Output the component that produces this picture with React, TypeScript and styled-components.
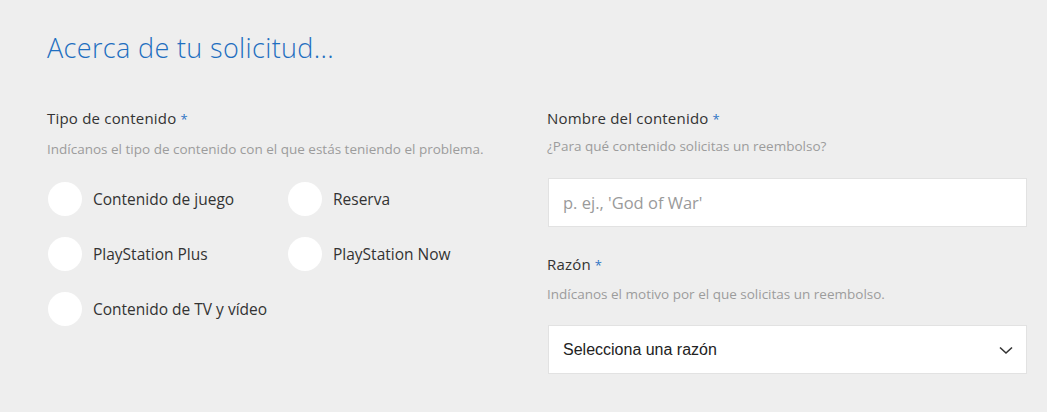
import React from 'react';
import styled, { createGlobalStyle } from 'styled-components';

const GlobalStyle = createGlobalStyle`
  html, body {
    margin: 0;
    padding: 0;
    background: #eeeeee;
  }
  body {
    font-family: 'Open Sans', 'Noto Sans', sans-serif;
    color: #333;
  }
`;

const Page = styled.div`
  width: 1047px;
  height: 412px;
  box-sizing: border-box;
  padding: 30px 20px 0 48px;
  background: #eeeeee;
  overflow: hidden;
`;

const Title = styled.h2`
  margin: 0 0 42px -1px;
  font-size: 27px;
  font-weight: 300;
  letter-spacing: 0.35px;
  line-height: 36px;
  color: #1f6fc0;
`;

const Columns = styled.div`
  display: grid;
  grid-template-columns: 1fr 479px;
  column-gap: 47px;
`;

const Column = styled.div`
  display: flex;
  flex-direction: column;
`;

const Field = styled.div<{ $gap?: number }>`
  display: flex;
  flex-direction: column;
  margin-bottom: ${({ $gap }) => $gap ?? 0}px;
`;

const Label = styled.div`
  margin-left: -1px;
  font-size: 15px;
  line-height: 20px;
  color: #333;
  letter-spacing: 0.2px;
`;

const Required = styled.span`
  color: #2f75c4;
  font-size: 13px;
  margin-left: 4px;
`;

const Hint = styled.div<{ $top?: number }>`
  margin-top: ${({ $top }) => $top ?? 8}px;
  margin-left: -1px;
  font-size: 13.5px;
  line-height: 18px;
  color: #9c9c9c;
`;

const RadioGrid = styled.div`
  display: grid;
  grid-template-columns: 240px 200px;
  row-gap: 21px;
  margin-top: 24px;
`;

const RadioItem = styled.label`
  display: flex;
  align-items: center;
  gap: 11px;
  font-size: 15.5px;
  color: #333;
  cursor: pointer;
`;

const RadioDot = styled.span`
  width: 34px;
  height: 34px;
  border-radius: 50%;
  background: #fff;
  flex-shrink: 0;
`;

const TextBox = styled.div`
  margin-top: 23px;
  height: 49px;
  box-sizing: border-box;
  border: 1px solid #e2e2e2;
  background: #fff;
  display: flex;
  align-items: center;
  padding: 0 14px;
  font-size: 16.5px;
  color: #9a9a9a;
`;

const SelectBox = styled(TextBox)`
  margin-top: 22px;
  justify-content: space-between;
  font-family: 'Liberation Sans', Arial, sans-serif;
  font-size: 16px;
  color: #222;
  padding-right: 12px;
`;

const ChevronIcon = () => (
  <svg width="16" height="16" viewBox="0 0 16 16" fill="none">
    <path d="M2 5.5 L8 11 L14 5.5" stroke="#333" strokeWidth="1.6" />
  </svg>
);

const options = [
  'Contenido de juego',
  'Reserva',
  'PlayStation Plus',
  'PlayStation Now',
  'Contenido de TV y vídeo',
];

export default function App() {
  return (
    <>
      <GlobalStyle />
      <Page>
        <Title>Acerca de tu solicitud...</Title>
        <Columns>
          <Column>
            <Field>
              <Label>
                Tipo de contenido<Required>*</Required>
              </Label>
              <Hint $top={11}>Indícanos el tipo de contenido con el que estás teniendo el problema.</Hint>
              <RadioGrid>
                {options.map((o) => (
                  <RadioItem key={o}>
                    <RadioDot />
                    {o}
                  </RadioItem>
                ))}
              </RadioGrid>
            </Field>
          </Column>
          <Column>
            <Field $gap={27}>
              <Label>
                Nombre del contenido<Required>*</Required>
              </Label>
              <Hint>¿Para qué contenido solicitas un reembolso?</Hint>
              <TextBox>p. ej., 'God of War'</TextBox>
            </Field>
            <Field>
              <Label>
                Razón<Required>*</Required>
              </Label>
              <Hint $top={10}>Indícanos el motivo por el que solicitas un reembolso.</Hint>
              <SelectBox>
                Selecciona una razón
                <ChevronIcon />
              </SelectBox>
            </Field>
          </Column>
        </Columns>
      </Page>
    </>
  );
}
